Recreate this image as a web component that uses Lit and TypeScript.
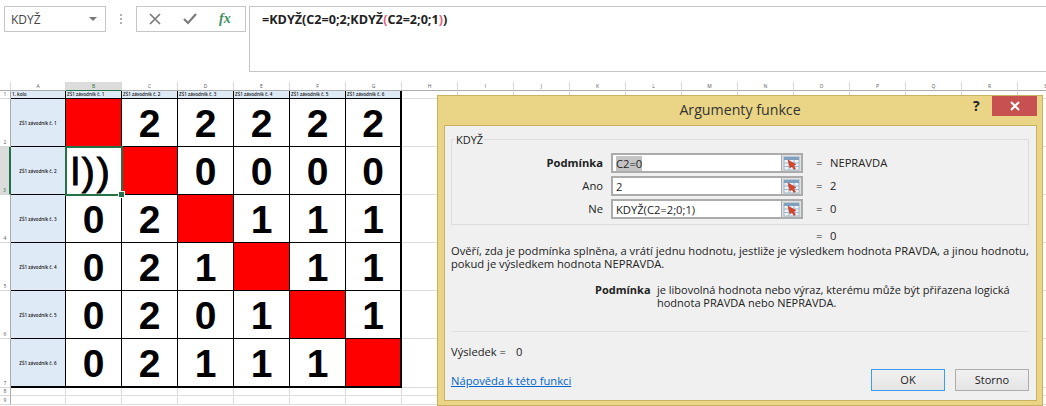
import { LitElement, html, css, svg } from "lit";
import { customElement } from "lit/decorators.js";

const COLS = ["A","B","C","D","E","F","G","H","I","J","K","L","M","N","O","P","Q","R","S"];
const NAMES = [1,2,3,4,5,6].map((n) => `ZŠ1 závodník č. ${n}`);
const DATA: string[][] = [
  ["x","2","2","2","2","2"],
  ["e","x","0","0","0","0"],
  ["0","2","x","1","1","1"],
  ["0","2","1","x","1","1"],
  ["0","2","0","1","x","1"],
  ["0","2","1","1","1","x"],
];
const ROW_H = [8, 48, 48, 48, 48, 48, 49, 8, 9];

const refIcon = svg`<svg class="ref" viewBox="0 0 17 15" width="17" height="15">
  <rect x="1" y="1" width="15" height="13" fill="#eef3f8" stroke="#9fb4c8"/>
  <rect x="1" y="1" width="15" height="3" fill="#7f9fbe"/>
  <path d="M1 7h15M1 10.500h15M6 4v10M11 4v10" stroke="#9fb4c8" fill="none"/>
  <path d="M5 4l8 4.500-2.500 1 2 3-1.500 1-2-3-2 1.500z" fill="#d8432a" stroke="#b83420" stroke-width=".5"/>
</svg>`;

@customElement("app-root")
export class AppRoot extends LitElement {
  static styles = css`
    :host { display: block; width: 1046px; height: 406px; overflow: hidden; position: relative; background: #fff; font-family: "Open Sans", "Noto Sans", sans-serif; color: #222; }
    .bar { display: flex; align-items: flex-start; height: 82px; box-sizing: border-box; padding: 6px 0 0 4px; background: #fff; }
    .name { width: 102px; height: 26px; box-sizing: border-box; border: 1px solid #c6c6c6; display: flex; align-items: center; justify-content: space-between; padding: 0 8px 0 6px; font-size: 12px; color: #444; }
    .caret { width: 0; height: 0; border-left: 4px solid transparent; border-right: 4px solid transparent; border-top: 4px solid #777; }
    .dots { width: 30px; display: flex; flex-direction: column; align-items: center; gap: 2px; height: 26px; justify-content: center; }
    .dots i { width: 2px; height: 2px; background: #b0b0b0; display: block; }
    .tools { width: 110px; height: 26px; box-sizing: border-box; border: 1px solid #c6c6c6; display: flex; align-items: center; padding-left: 12px; gap: 22px; }
    .fx { font-family: "Liberation Serif", serif; font-style: italic; font-weight: bold; font-size: 14px; color: #3f8f5f; }
    .formula { flex: 1; margin-left: 3px; height: 66px; box-sizing: border-box; border: 1px solid #c6c6c6; border-right: 0; padding: 4px 0 0 12px; font-size: 12.6px; font-weight: 700; color: #222; white-space: nowrap; }
    .pink { color: #e4607f; }
    .sheet { display: grid; grid-template-columns: 11px 55px repeat(6, 56px) repeat(12, 56px); width: 1074px; }
    .hc { height: 9px; box-sizing: border-box; font-size: 5px; line-height: 8px; text-align: center; color: #555; border-right: 1px solid #d8d8d8; border-bottom: 1px solid #ababab; }
    .hc.sel { background: #dcdcdc; border-bottom: 1px solid #217346; color: #217346; }
    .hr { font-size: 5px; color: #555; border-right: 1px solid #ababab; border-bottom: 1px solid #d8d8d8; box-sizing: border-box; display: flex; align-items: flex-end; justify-content: center; line-height: 7px; }
    .hr.sel { background: #dcdcdc; color: #217346; border-right: 2px solid #217346; }
    .gc { box-sizing: border-box; border-right: 1px solid #dcdcdc; border-bottom: 1px solid #dcdcdc; }
    .c { box-sizing: border-box; border-right: 1px solid #000; border-bottom: 1px solid #000; background: #fff; position: relative; display: flex; align-items: center; justify-content: center; min-width: 0; }
    .blue { background: #deeaf6; font-size: 4.6px; font-weight: 600; color: #111; white-space: nowrap; }
    .top { justify-content: flex-start; padding-left: 1px; overflow: hidden; line-height: 7px; }
    .num { font-family: "Liberation Sans", Arial, sans-serif; font-weight: 700; font-size: 39px; line-height: 40px; color: #000; margin-top: 3px; }
    .red { background: #f00; }
    .right { border-right: 2px solid #000; }
    .bottom { border-bottom: 2px solid #000; }
    .edit { justify-content: flex-start; padding: 3px 0 0 5px; font-family: "Liberation Sans", Arial, sans-serif; font-size: 39px; line-height: 40px; letter-spacing: 2px; font-weight: 400; color: #000; outline: 2px solid #217346; outline-offset: -1px; z-index: 2; -webkit-text-stroke: 1px #000; }
    .handle { position: absolute; right: -4px; bottom: -4px; width: 5px; height: 5px; background: #217346; border: 1px solid #fff; }

    .dlg { position: absolute; left: 437px; top: 95px; width: 606px; height: 311px; box-sizing: border-box; background: #ead586; border: 1px solid #c9b15f; padding: 29px 5px 4px 6px; }
    .title { position: absolute; left: 0; right: 0; top: 4px; text-align: center; font-size: 14.2px; color: #333; }
    .help { position: absolute; left: 535px; top: 0; font-weight: 700; font-size: 14px; color: #222; }
    .close { position: absolute; left: 554px; top: 0; width: 45px; height: 20px; background: #c75050; display: flex; align-items: center; justify-content: center; }
    .inner { height: 100%; box-sizing: border-box; background: #f0f0f0; border: 1px solid #c9b15f; padding: 13px 7px 0 6px; font-size: 11.2px; color: #222; display: flex; flex-direction: column; }
    .group { position: relative; border: 1px solid #dcdcdc; height: 86px; box-sizing: border-box; padding-top: 13px; display: grid; grid-template-columns: 151px 192px 1fr; column-gap: 8px; row-gap: 3px; align-content: start; }
    .legend { position: absolute; left: 3px; top: -7px; background: #f0f0f0; padding: 0 1px; font-size: 11px; line-height: 13px; }
    .lbl { text-align: right; line-height: 20px; }
    .lbl b { font-weight: 700; }
    .field { height: 20px; box-sizing: border-box; border: 2px solid #ababab; background: #fff; display: flex; align-items: stretch; }
    .val { flex: 1; padding-left: 3px; line-height: 17px; white-space: nowrap; }
    .hl { background: #c4c4c4; }
    .btn { width: 19px; background: #e1e1e1; border-left: 1px solid #ababab; display: flex; align-items: center; justify-content: center; }
    .ref { display: block; }
    .res { display: flex; gap: 7px; line-height: 20px; padding-left: 5px; }
    .res span { width: 7px; }
    .total { height: 20px; display: flex; align-items: center; padding-left: 365px; gap: 7px; }
    .total span:first-child { width: 7px; }
    .desc { line-height: 13px; margin-top: -1px; }
    .arg { display: flex; margin-top: 13px; line-height: 13px; padding-left: 144px; font-size: 11px; }
    .arg b { width: 62px; flex: none; font-weight: 700; }
    .arg div { width: 370px; }
    .hr2 { height: 1px; background: #dfdfdf; margin-top: 22px; }
    .result { margin-top: 13px; line-height: 13px; }
    .result span { margin-left: 7px; }
    .foot { display: flex; justify-content: space-between; align-items: center; margin-top: 11px; }
    a { color: #0066cc; text-decoration: underline; }
    .btns { display: flex; gap: 10px; }
    button { all: unset; width: 74px; height: 22px; box-sizing: border-box; border: 1px solid #adadad; background: linear-gradient(#f0f0f0, #e5e5e5); font-size: 11px; text-align: center; line-height: 20px; color: #222; font-family: inherit; }
    button.def { border: 1px solid #3c9cf0; }
  `;

  private cell(v: string, r: number, c: number) {
    const cls = ["c", c === 5 ? "right" : "", r === 5 ? "bottom" : ""].join(" ");
    if (v === "x") return html`<div class="${cls} red"></div>`;
    if (v === "e") return html`<div class="${cls} edit">l))<div class="handle"></div></div>`;
    return html`<div class="${cls}"><span class="num">${v}</span></div>`;
  }

  private field(v: unknown, res: string) {
    return html`
      <div class="field"><div class="val">${v}</div><div class="btn">${refIcon}</div></div>
      <div class="res"><span>=</span>${res}</div>`;
  }

  private filler() {
    return COLS.slice(7).map(() => html`<div class="gc"></div>`);
  }

  render() {
    return html`
      <div class="bar">
        <div class="name">KDYŽ<span class="caret"></span></div>
        <div class="dots"><i></i><i></i><i></i></div>
        <div class="tools">
          <svg width="12" height="12" viewBox="0 0 12 12"><path d="M1 1l10 10M11 1L1 11" stroke="#7a7a7a" stroke-width="1.700" fill="none"/></svg>
          <svg width="14" height="12" viewBox="0 0 14 12"><path d="M1 6l4 4 8-9" stroke="#7a7a7a" stroke-width="2.200" fill="none"/></svg>
          <span class="fx">fx</span>
        </div>
        <div class="formula">=KDYŽ(C2=0;2;KDYŽ<span class="pink">(</span>C2=2;0;1<span class="pink">)</span>)</div>
      </div>
      <div class="sheet">
        <div class="hc"></div>
        ${COLS.map((c) => html`<div class="hc ${c === "B" ? "sel" : ""}">${c}</div>`)}
        ${ROW_H.map((h, i) => {
          const row = i + 1;
          const head = html`<div class="hr ${row === 3 ? "sel" : ""}" style="height:${h}px">${row}</div>`;
          if (row === 1) return html`${head}
            <div class="c blue top">1. kolo</div>
            ${NAMES.map((n, k) => html`<div class="c blue top ${k === 5 ? "right" : ""}">${n}</div>`)}
            ${this.filler()}`;
          if (row <= 7) return html`${head}
            <div class="c blue ${row === 7 ? "bottom" : ""}">${NAMES[row - 2]}</div>
            ${DATA[row - 2].map((v, k) => this.cell(v, row - 2, k))}
            ${this.filler()}`;
          return html`${head}${COLS.slice(0, 7).map(() => html`<div class="gc"></div>`)}${this.filler()}`;
        })}
      </div>
      <div class="dlg">
        <div class="title">Argumenty funkce</div>
        <div class="help">?</div>
        <div class="close"><svg width="10" height="10" viewBox="0 0 10 10"><path d="M1 1l8 8M9 1L1 9" stroke="#fff" stroke-width="2" fill="none"/></svg></div>
        <div class="inner">
          <div class="group">
            <div class="legend">KDYŽ</div>
            <div class="lbl"><b>Podmínka</b></div>
            ${this.field(html`<span class="hl">C2=0</span>`, "NEPRAVDA")}
            <div class="lbl">Ano</div>
            ${this.field("2", "2")}
            <div class="lbl">Ne</div>
            ${this.field("KDYŽ(C2=2;0;1)", "0")}
          </div>
          <div class="total"><span>=</span><span>0</span></div>
          <div class="desc">Ověří, zda je podmínka splněna, a vrátí jednu hodnotu, jestliže je výsledkem hodnota PRAVDA, a jinou hodnotu,<br>pokud je výsledkem hodnota NEPRAVDA.</div>
          <div class="arg"><b>Podmínka</b><div>je libovolná hodnota nebo výraz, kterému může být přiřazena logická hodnota PRAVDA nebo NEPRAVDA.</div></div>
          <div class="hr2"></div>
          <div class="result">Výsledek = <span>0</span></div>
          <div class="foot"><a>Nápověda k této funkci</a><div class="btns"><button class="def">OK</button><button>Storno</button></div></div>
        </div>
      </div>
    `;
  }
}
